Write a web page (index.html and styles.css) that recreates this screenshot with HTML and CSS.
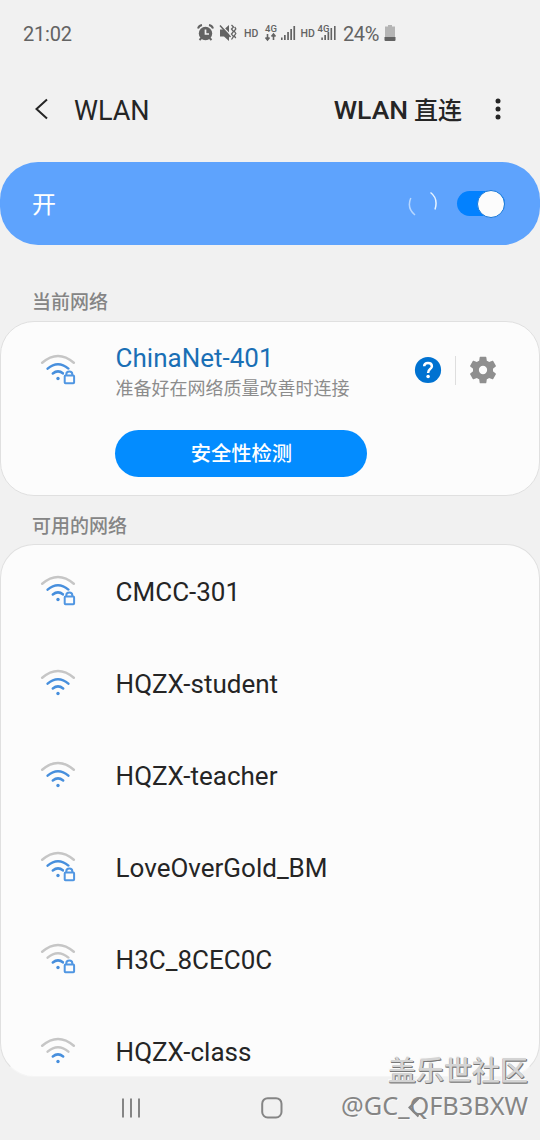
FILE: index.html
```html
<!DOCTYPE html>
<html lang="zh-CN">
<head>
<meta charset="utf-8">
<title>WLAN</title>
<link rel="stylesheet" href="styles.css">
</head>
<body>
<svg class="defs" aria-hidden="true">
  <symbol id="wifi" viewBox="0 0 38 34">
    <path class="arc outer" d="M2.200 8.800Q18 -4.800 33.800 8.800"/>
    <path class="arc middle" d="M7.600 14.600Q18 5.900 28.400 14.600"/>
    <path class="arc inner" d="M12.800 19.400Q18 15.400 23.200 19.400"/>
    <circle class="dot" cx="18" cy="24.500" r="1.700"/>
  </symbol>
  <symbol id="lock" viewBox="0 0 38 34">
    <path class="mask" d="M23.500 31V22Q24 15.500 29.300 15.500T36 22V31Z"/>
    <rect class="lockline" x="24.700" y="21.600" width="9.400" height="7.700" rx=".8"/>
    <path class="lockline" d="M26.300 21.500V20.200Q26.300 17.600 29.300 17.600T32.300 20.200V21.500"/>
  </symbol>
</svg>
<div class="phone">
  <header class="status">
    <span class="time">21:02</span>
    <svg class="indicators" width="144" height="26" viewBox="0 0 144 26">
      <g fill="#636363">
        <circle cx="9.500" cy="13.500" r="6.700"/>
        <path d="M2 8.500Q3 5.500 6 5M13 5Q16 5.500 17 8.500M5.500 18L3.500 20M13.500 18L15.500 20" fill="none" stroke="#636363" stroke-width="2"/>
        <path d="M9.500 9.500V14H13" fill="none" stroke="#f1f1f1" stroke-width="1.700"/>
        <path d="M24 9.500H28L33 5V21L28 16.500H24Z"/>
        <path d="M25 5L35 15.500" stroke="#f1f1f1" stroke-width="1.300"/>
        <path d="M24 5.500L34.500 17" stroke="#636363" stroke-width="1.500"/>
        <path d="M35.500 5L37.500 7L35.500 9L37.500 11.500L35.500 14L37.500 16.500L35.500 19.500M38.800 7L39.800 9L38.200 11L39.800 13.500L38.200 16L39.800 18" fill="none" stroke="#636363" stroke-width="1.300"/>
        <text x="48" y="16.500" class="tag">HD</text><text x="104.500" y="16.500" class="tag">HD</text>
        <text x="69" y="12" class="tag small">4G</text><text x="121.500" y="12" class="tag small">4G</text>
        <path d="M71.500 14V20M69.500 17.500L71.500 20L73.500 17.500M77.500 20V14.500M75.500 16.500L77.500 14L79.500 16.500" fill="none" stroke="#636363" stroke-width="1.600"/>
        <path d="M85 17.500h1.600V20H85ZM88 15h1.700V20H88ZM91.200 12h1.700V20h-1.700ZM94.300 9H96V20h-1.700ZM97.400 6h1.700V20h-1.700Z"/>
        <path d="M125.300 17.500h1.600V20h-1.600ZM128.300 15h1.700V20h-1.700ZM131.500 12h1.700V20h-1.700ZM134.500 8h1.600V20h-1.600ZM138 6h1.600V20H138Z"/>
      </g>
    </svg>
    <span class="percent">24%</span>
    <svg class="battery" width="12" height="18" viewBox="0 0 12 18"><path fill="#b5b5b5" d="M4 1H8V2.500H11V16Q11 17 10 17H2Q1 17 1 16V2.500H4Z"/><path fill="#636363" d="M.5 13H11.500V16Q11.500 17 10.500 17H1.500Q.5 17 .5 16Z"/></svg>
  </header>
  <nav class="toolbar">
    <svg class="back" width="16" height="24" viewBox="0 0 16 24"><path d="M13 2.500L2.500 12L13 21.500" fill="none" stroke="#252525" stroke-width="2"/></svg>
    <h1>WLAN</h1>
    <span class="direct"><span class="latin">WLAN</span> 直连</span>
    <svg class="more" width="6" height="22" viewBox="0 0 6 22"><g fill="#252525"><circle cx="3" cy="3" r="2.500"/><circle cx="3" cy="11" r="2.500"/><circle cx="3" cy="19" r="2.500"/></g></svg>
  </nav>
  <section class="master">
    <span>开</span>
    <svg class="spinner" width="30" height="30" viewBox="0 0 30 30" fill="none" stroke-width="1.500"><path d="M2.800 9Q-1.500 19 7 26" stroke="#b7d7ff"/><path d="M22.500 3.500Q30.500 9.500 27 20.500" stroke="#e8f4ff"/></svg>
    <div class="switch"><div class="knob"></div></div>
  </section>
  <h2 class="label current-label">当前网络</h2>
  <section class="card current">
    <div class="current-main">
      <svg class="wifi level2" width="38" height="34"><use href="#wifi"/><use href="#lock"/></svg>
      <div class="names"><div class="ssid">ChinaNet-401</div><div class="sub">准备好在网络质量改善时连接</div></div>
      <svg class="help" width="28" height="28" viewBox="0 0 28 28"><circle cx="14" cy="14" r="13.100" fill="#0072d1"/><path d="M10.200 10.300Q10.200 7 14 7T17.900 10.200Q17.900 11.800 15.900 13.200Q14.100 14.500 14.100 17" fill="none" stroke="#fff" stroke-width="2.500"/><circle cx="14.100" cy="20.500" r="1.800" fill="#fff"/></svg>
      <div class="rule"></div>
      <svg class="gear" width="32" height="32" viewBox="0 0 24 24"><path fill="#8f8f8f" d="M19.430 12.980c.04-.32.070-.64.070-.98s-.03-.66-.07-.98l2.110-1.650c.19-.15.240-.42.120-.64l-2-3.460c-.12-.22-.39-.3-.61-.22l-2.490 1c-.52-.4-1.080-.73-1.690-.98l-.38-2.650A.488.488 0 0 0 14 2h-4c-.25 0-.46.180-.49.420l-.38 2.650c-.61.250-1.170.590-1.690.98l-2.490-1c-.23-.09-.49 0-.61.220l-2 3.460c-.13.220-.07.490.12.640l2.110 1.650c-.04.320-.07.650-.07.980s.03.660.07.980l-2.110 1.650c-.19.150-.24.420-.12.640l2 3.460c.12.220.39.300.61.220l2.490-1c.52.400 1.080.730 1.690.980l.38 2.650c.03.240.24.420.49.420h4c.25 0 .46-.18.490-.42l.38-2.650c.61-.25 1.170-.59 1.690-.98l2.490 1c.23.090.49 0 .61-.22l2-3.460c.12-.22.070-.49-.12-.64zM12 15.100A3.100 3.100 0 1 1 12 8.900 3.100 3.100 0 0 1 12 15.100z"/></svg>
    </div>
    <button class="check">安全性检测</button>
  </section>
  <h2 class="label available-label">可用的网络</h2>
  <main class="card available">
    <div class="row"><svg class="wifi level2" width="38" height="34"><use href="#wifi"/><use href="#lock"/></svg><span>CMCC-301</span></div>
    <div class="row"><svg class="wifi level2 open" width="38" height="34"><use href="#wifi"/></svg><span>HQZX-student</span></div>
    <div class="row"><svg class="wifi level2 open" width="38" height="34"><use href="#wifi"/></svg><span>HQZX-teacher</span></div>
    <div class="row"><svg class="wifi level2" width="38" height="34"><use href="#wifi"/><use href="#lock"/></svg><span>LoveOverGold_BM</span></div>
    <div class="row"><svg class="wifi level1" width="38" height="34"><use href="#wifi"/><use href="#lock"/></svg><span>H3C_8CEC0C</span></div>
    <div class="row"><svg class="wifi level1 open" width="38" height="34"><use href="#wifi"/></svg><span>HQZX-class</span></div>
  </main>
  <footer class="navbar">
    <svg width="20" height="20" viewBox="0 0 20 20"><path d="M2 .5V19.500M10 .5V19.500M18 .5V19.500" stroke="#858585" stroke-width="2"/></svg>
    <svg class="home" width="22" height="22" viewBox="0 0 22 22"><rect x="1.200" y="1.200" width="19.300" height="19.300" rx="5.500" fill="none" stroke="#858585" stroke-width="2"/></svg>
    <svg class="navback" width="12" height="22" viewBox="0 0 12 22"><path d="M10.500 1.500L1.500 10.500L10.500 19.500" fill="none" stroke="#858585" stroke-width="2.200"/></svg>
  </footer>
  <div class="watermark"><div class="community">盖乐世社区</div><div class="user">@GC_QFB3BXW</div></div>
</div>
</body>
</html>
```

FILE: styles.css
```css
* { box-sizing: border-box; }
body { margin: 0; background: #f1f1f1; color: #252525; font-family: Roboto, "Noto Sans CJK SC", sans-serif; }
.defs { display: none; }
.phone { position: relative; width: 540px; height: 1140px; overflow: hidden; display: flex; flex-direction: column; }
.phone > * { flex-shrink: 0; }
h1, h2 { margin: 0; font-weight: 400; }
.status { height: 68px; padding-left: 23px; display: flex; align-items: center; color: #636363; font-size: 20px; }
.time { width: 173px; letter-spacing: -.2px; }
.indicators { margin-top: -2px; }
.percent { width: 43px; margin-left: 3px; letter-spacing: -.4px; }
.battery { margin: -2px 0 0 -2px; }
.tag { font: 500 10.500px Roboto, sans-serif; }
.small { font-size: 9.500px; }
.toolbar { height: 94px; padding: 0 39px 10px 34px; display: flex; align-items: center; }
.back, .more { margin-top: -3px; }
.toolbar h1 { font-size: 27px; line-height: 36px; margin: 1px 0 0 24px; flex: 1; }
.direct { font-size: 24px; font-weight: 500; line-height: 36px; margin: 0 33px 0 0; }
.latin { font-size: 26.500px; }
.master { height: 83px; border-radius: 38px; background: #5ea3fd; color: #fff; display: flex; align-items: center; padding: 0 35px 0 32px; font-size: 24px; }
.master span { flex: 1; margin-top: -2px; }
.spinner { margin-right: 19px; }
.switch { width: 48px; height: 25px; border-radius: 13px; background: #0381fe; display: flex; align-items: center; justify-content: flex-end; }
.knob { width: 28px; height: 28px; flex: none; border-radius: 50%; background: #fcfcfc; border: 1px solid #1878d8; }
.label { font-size: 19px; line-height: 28px; color: #858585; font-weight: 500; padding-left: 32px; }
.current-label { height: 76px; padding-top: 44px; }
.available-label { height: 48px; padding-top: 17px; }
.card { background: #fcfcfc; border: 1px solid #e0e0e0; border-radius: 34px; overflow: hidden; }
.current { height: 175px; }
.current-main { height: 108px; display: flex; padding: 0 40px 0 39px; }
.current-main .wifi { margin-top: 32px; }
.names { padding-top: 19px; margin-left: 37.600px; flex: 1; }
.ssid { font-size: 26px; line-height: 35px; color: #1a6fb5; }
.sub { font-size: 18px; line-height: 26px; color: #8c8c8c; white-space: nowrap; }
.help { margin: 34px 13px 0 0; }
.rule { width: 1px; height: 29px; margin: 34px 11px 0 0; background: #dedede; }
.gear { margin-top: 32px; }
.check { display: block; width: 252px; height: 47px; margin-left: 114.400px; border: 0; border-radius: 24px; background: #038cff; color: #fff; font: 500 20.300px/49px Roboto, "Noto Sans CJK SC", sans-serif; padding: 0; }
.available { height: 533px; padding-top: 1px; border-bottom-color: #f5f5f5; }
.row { height: 92px; display: flex; align-items: center; padding-left: 39px; font-size: 26px; }
.row .wifi { margin: 0 37.600px 0 0; }
.row .open { margin-top: 4px; }
.arc { fill: none; stroke-width: 2.500; stroke-linecap: round; }
.outer { stroke: #c6c6c6; }
.middle { stroke: var(--middle); }
.inner { stroke: #478fdd; }
.dot { fill: #478fdd; }
.level2 { --middle: #478fdd; }
.level1 { --middle: #c6c6c6; }
.mask { fill: #fcfcfc; }
.lockline { fill: none; stroke: #5096e2; stroke-width: 2; }
.navbar { height: 62px; padding: 0 120px 0 121px; display: flex; align-items: center; }
.home { margin: 0 auto 0 119.500px; }
.navback { position: relative; z-index: 2; }
.watermark { position: absolute; right: 12px; bottom: 17px; text-align: right; }
.community { font: 500 28px/36px "Noto Sans CJK SC", sans-serif; color: #d4d4d4; text-shadow: 1px 1px #777, 0 1px #777, -1px -1px #fafafa; }
.user { font: 25.300px/36px "Noto Sans", sans-serif; color: #858585; text-shadow: 1px 1px #fafafa; }
```
